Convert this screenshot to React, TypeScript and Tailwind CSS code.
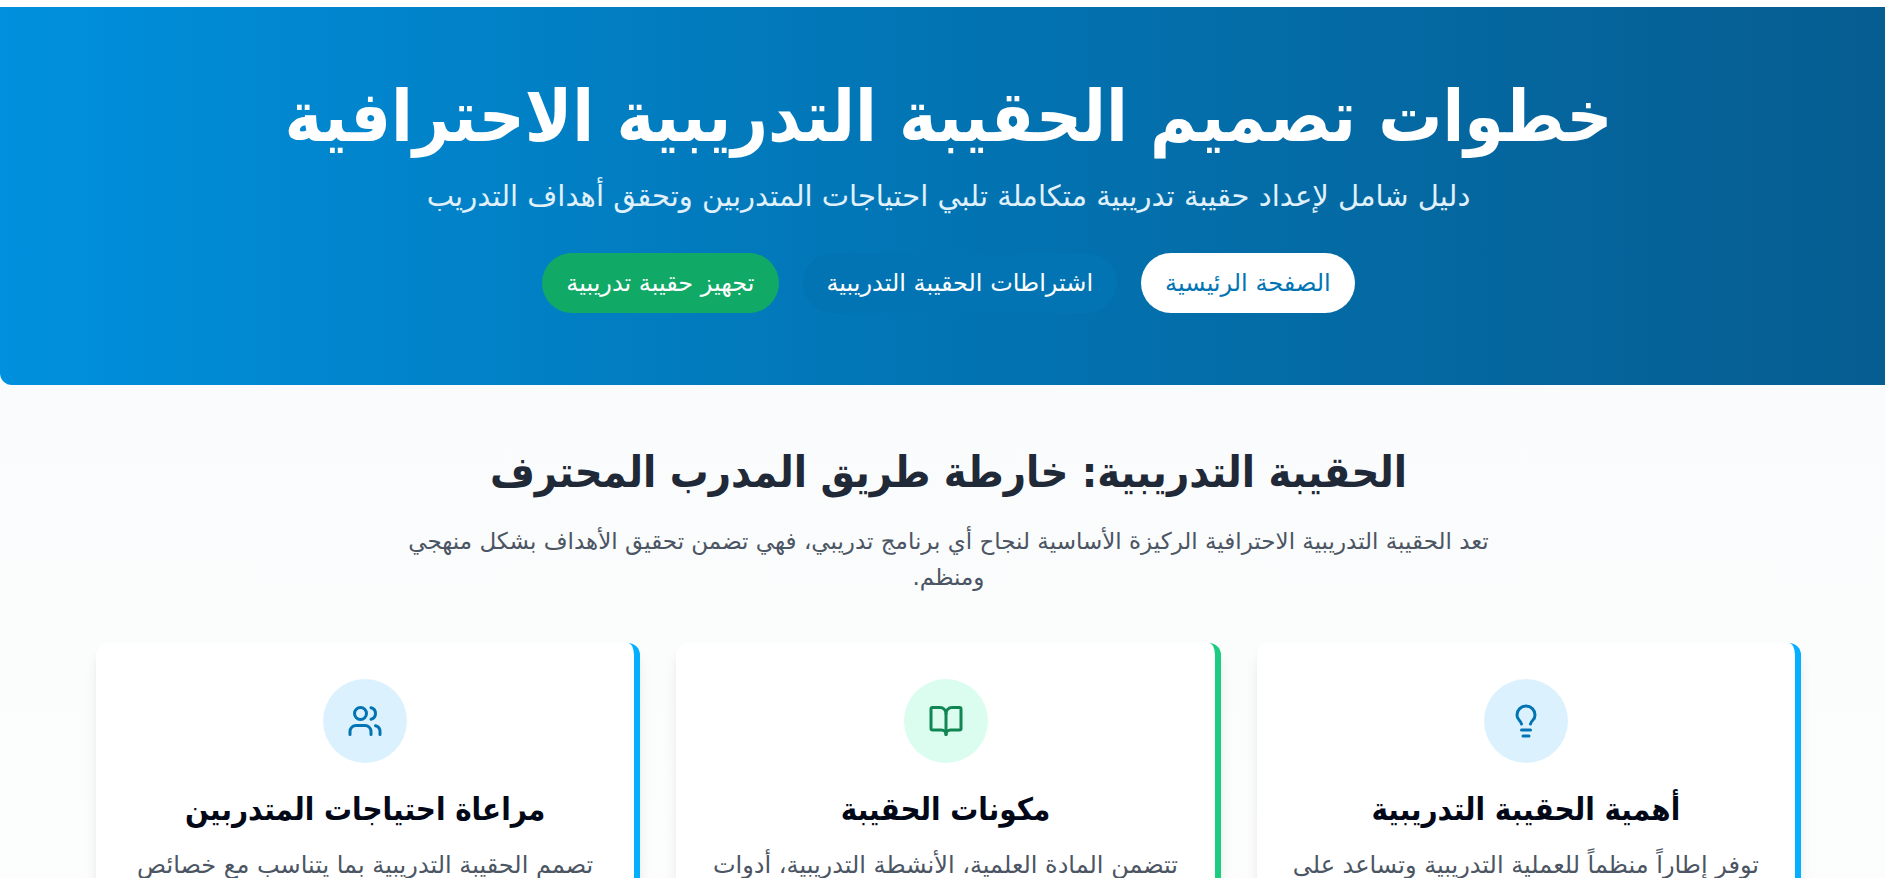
import { BookOpen, Lightbulb, Users } from 'lucide-react'

const links = [
  { label: 'الصفحة الرئيسية', className: 'bg-white text-[#0274b3]' },
  { label: 'اشتراطات الحقيبة التدريبية', className: 'bg-[#0274b3] text-white font-medium' },
  { label: 'تجهيز حقيبة تدريبية', className: 'bg-[#11a966] text-white font-medium' },
]

const cards = [
  {
    title: 'أهمية الحقيبة التدريبية',
    text: 'توفر إطاراً منظماً للعملية التدريبية وتساعد على',
    icon: Lightbulb,
    border: 'border-[#06aeff]',
    circle: 'bg-[#dcf1fe] text-[#0274b3]',
  },
  {
    title: 'مكونات الحقيبة',
    text: 'تتضمن المادة العلمية، الأنشطة التدريبية، أدوات',
    icon: BookOpen,
    border: 'border-[#1ccc81]',
    circle: 'bg-[#dbfdef] text-[#118653]',
  },
  {
    title: 'مراعاة احتياجات المتدربين',
    text: 'تصمم الحقيبة التدريبية بما يتناسب مع خصائص',
    icon: Users,
    border: 'border-[#06aeff]',
    circle: 'bg-[#dcf1fe] text-[#0274b3]',
  },
]

export default function App() {
  return (
    <div
      dir="rtl"
      className="min-h-screen overflow-hidden bg-gradient-to-b from-[#f9fafc] to-[#fcfdfc] font-['DejaVu_Sans',sans-serif]"
    >
      {/* Hero */}
      <div className="h-[7px] bg-white" />
      <header className="rounded-bl-xl bg-gradient-to-l from-[#065d91] via-[#0274b3] to-[#0090dd] pt-16 pb-[72px] pl-3 text-center text-white">
        <h1 className="font-['DejaVu_Sans_Condensed','DejaVu_Sans',sans-serif] text-[71px] leading-[92px] font-bold">
          خطوات تصميم الحقيبة التدريبية الاحترافية
        </h1>
        <p className="mt-3 text-[29px] leading-[42px] text-[#e0f1fb]">
          دليل شامل لإعداد حقيبة تدريبية متكاملة تلبي احتياجات المتدربين وتحقق أهداف التدريب
        </p>
        <nav className="mt-9 flex justify-center gap-6">
          {links.map((link) => (
            <a key={link.label} href="#" className={`rounded-full px-6 py-3 text-[24px] leading-9 ${link.className}`}>
              {link.label}
            </a>
          ))}
        </nav>
      </header>

      <main className="pt-[60px] pr-21 pl-24">
        {/* Intro */}
        <div className="mx-auto max-w-[1152px] text-center">
          <h2 className="font-['DejaVu_Sans_Condensed','DejaVu_Sans',sans-serif] text-[43px] leading-[54px] font-bold text-[#1f2937]">
            الحقيبة التدريبية: خارطة طريق المدرب المحترف
          </h2>
          <p className="mt-6 text-[23px] leading-9 text-[#4b5563]">
            تعد الحقيبة التدريبية الاحترافية الركيزة الأساسية لنجاح أي برنامج تدريبي، فهي تضمن تحقيق الأهداف بشكل منهجي
            <br />
            ومنظم.
          </p>
        </div>

        {/* Cards */}
        <div className="mt-12 grid grid-cols-3 gap-9">
          {cards.map((card) => (
            <div
              key={card.title}
              className={`rounded-xl border-r-6 bg-white px-9 pt-9 pb-36 text-center shadow-lg ${card.border}`}
            >
              <div className={`mx-auto flex size-21 items-center justify-center rounded-full ${card.circle}`}>
                <card.icon className="size-9" />
              </div>
              <h3 className="mt-6 font-['DejaVu_Sans_Condensed','DejaVu_Sans',sans-serif] text-[31px] leading-[44px] font-bold text-[#020817]">
                {card.title}
              </h3>
              <p className="mt-4 text-[24px] leading-9 whitespace-nowrap text-[#4b5563]">{card.text}</p>
            </div>
          ))}
        </div>
      </main>
    </div>
  )
}
